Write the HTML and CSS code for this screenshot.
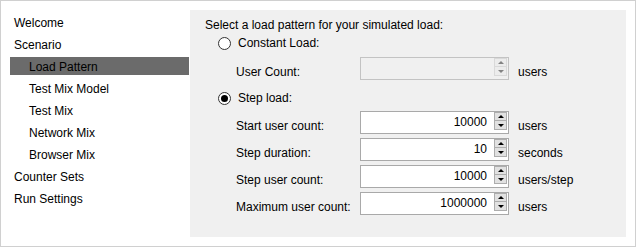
FILE: index.html
```html
<!DOCTYPE html>
<html lang="en">
<head>
    <meta charset="UTF-8">
    <title>Load Pattern</title>
    <link rel="stylesheet" href="styles.css">
</head>
<body>
    <div class="window">
        <div class="nav">
            <div class="nav-item">Welcome</div>
            <div class="nav-item">Scenario</div>
            <div class="nav-item sub selected">Load Pattern</div>
            <div class="nav-item sub">Test Mix Model</div>
            <div class="nav-item sub">Test Mix</div>
            <div class="nav-item sub">Network Mix</div>
            <div class="nav-item sub">Browser Mix</div>
            <div class="nav-item">Counter Sets</div>
            <div class="nav-item">Run Settings</div>
        </div>

        <div class="panel">
            <div class="title">Select a load pattern for your simulated load:</div>

            <div class="radio-row first">
                <span class="radio"></span>
                <span>Constant Load:</span>
            </div>
            <div class="field-row constant">
                <span class="label">User Count:</span>
                <div class="spin disabled">
                    <span class="value"></span>
                    <div class="buttons">
                        <span class="btn up"></span>
                        <span class="btn down"></span>
                    </div>
                </div>
                <span class="unit">users</span>
            </div>

            <div class="radio-row second">
                <span class="radio checked"></span>
                <span>Step load:</span>
            </div>
            <div class="field-row">
                <span class="label">Start user count:</span>
                <div class="spin">
                    <span class="value">10000</span>
                    <div class="buttons">
                        <span class="btn up"></span>
                        <span class="btn down"></span>
                    </div>
                </div>
                <span class="unit">users</span>
            </div>
            <div class="field-row">
                <span class="label">Step duration:</span>
                <div class="spin">
                    <span class="value">10</span>
                    <div class="buttons">
                        <span class="btn up"></span>
                        <span class="btn down"></span>
                    </div>
                </div>
                <span class="unit">seconds</span>
            </div>
            <div class="field-row">
                <span class="label">Step user count:</span>
                <div class="spin">
                    <span class="value">10000</span>
                    <div class="buttons">
                        <span class="btn up"></span>
                        <span class="btn down"></span>
                    </div>
                </div>
                <span class="unit">users/step</span>
            </div>
            <div class="field-row">
                <span class="label">Maximum user count:</span>
                <div class="spin">
                    <span class="value">1000000</span>
                    <div class="buttons">
                        <span class="btn up"></span>
                        <span class="btn down"></span>
                    </div>
                </div>
                <span class="unit">users</span>
            </div>
        </div>
    </div>
</body>
</html>
```

FILE: styles.css
```css
body {
    margin: 0;
    font-family: "Liberation Sans", Arial, sans-serif;
    font-size: 12px;
    color: #000;
    background: #fff;
}
.window {
    box-sizing: border-box;
    width: 636px;
    height: 247px;
    border: 1px solid #d0d0d0;
    display: flex;
    background: #fff;
}
.nav {
    width: 189px;
    padding-top: 8px;
}
.nav-item {
    height: 18px;
    line-height: 20px;
    margin: 4px 1px 0 9px;
    padding-left: 4px;
    white-space: nowrap;
}
.nav-item.sub {
    padding-left: 19px;
}
.nav-item.selected {
    background: #6b6b6b;
}
.panel {
    flex: 1;
    margin: 9px 9px 9px 0;
    background: #f0f0f0;
    padding: 7px 0 0 15px;
}
.title {
    line-height: 16px;
    white-space: nowrap;
}
.radio-row {
    display: flex;
    align-items: center;
    height: 18px;
    line-height: 18px;
    padding-left: 13px;
}
.radio-row.first {
    margin-top: 1px;
}
.radio-row.second {
    margin-top: 9px;
}
.radio {
    box-sizing: border-box;
    width: 13px;
    height: 13px;
    border: 1px solid #333;
    border-radius: 50%;
    background: #fff;
    margin-right: 7px;
    display: flex;
    align-items: center;
    justify-content: center;
}
.radio.checked::after {
    content: "";
    width: 7px;
    height: 7px;
    border-radius: 50%;
    background: #000;
}
.field-row {
    display: flex;
    height: 23px;
    margin-top: 4px;
    padding-left: 31px;
}
.field-row.constant {
    margin-top: 5px;
}
.label {
    width: 124px;
    margin-top: 8px;
    line-height: 15px;
    white-space: nowrap;
}
.unit {
    margin: 8px 0 0 9px;
    line-height: 15px;
}
.spin {
    box-sizing: border-box;
    width: 149px;
    height: 23px;
    border: 1px solid #a9a9a9;
    background: #fff;
    display: flex;
}
.spin.disabled {
    background: #f0f0f0;
    border-color: #c3c3c3;
}
.value {
    flex: 1;
    text-align: right;
    line-height: 21px;
    padding-right: 7px;
}
.buttons {
    width: 13px;
    margin-right: 1px;
    display: flex;
    flex-direction: column;
}
.btn {
    box-sizing: border-box;
    height: 9px;
    border: 1px solid #adadad;
    background: #e1e1e1;
    display: flex;
    align-items: center;
    justify-content: center;
}
.btn.down {
    border-top: none;
}
.btn.up::after {
    content: "";
    border-left: 3px solid transparent;
    border-right: 3px solid transparent;
    border-bottom: 3px solid #000;
}
.btn.down::after {
    content: "";
    border-left: 3px solid transparent;
    border-right: 3px solid transparent;
    border-top: 3px solid #000;
}
.disabled .btn {
    border-color: #d9d9d9;
    background: #ececec;
}
.disabled .btn.up::after {
    border-bottom-color: #838383;
}
.disabled .btn.down::after {
    border-top-color: #838383;
}
```
